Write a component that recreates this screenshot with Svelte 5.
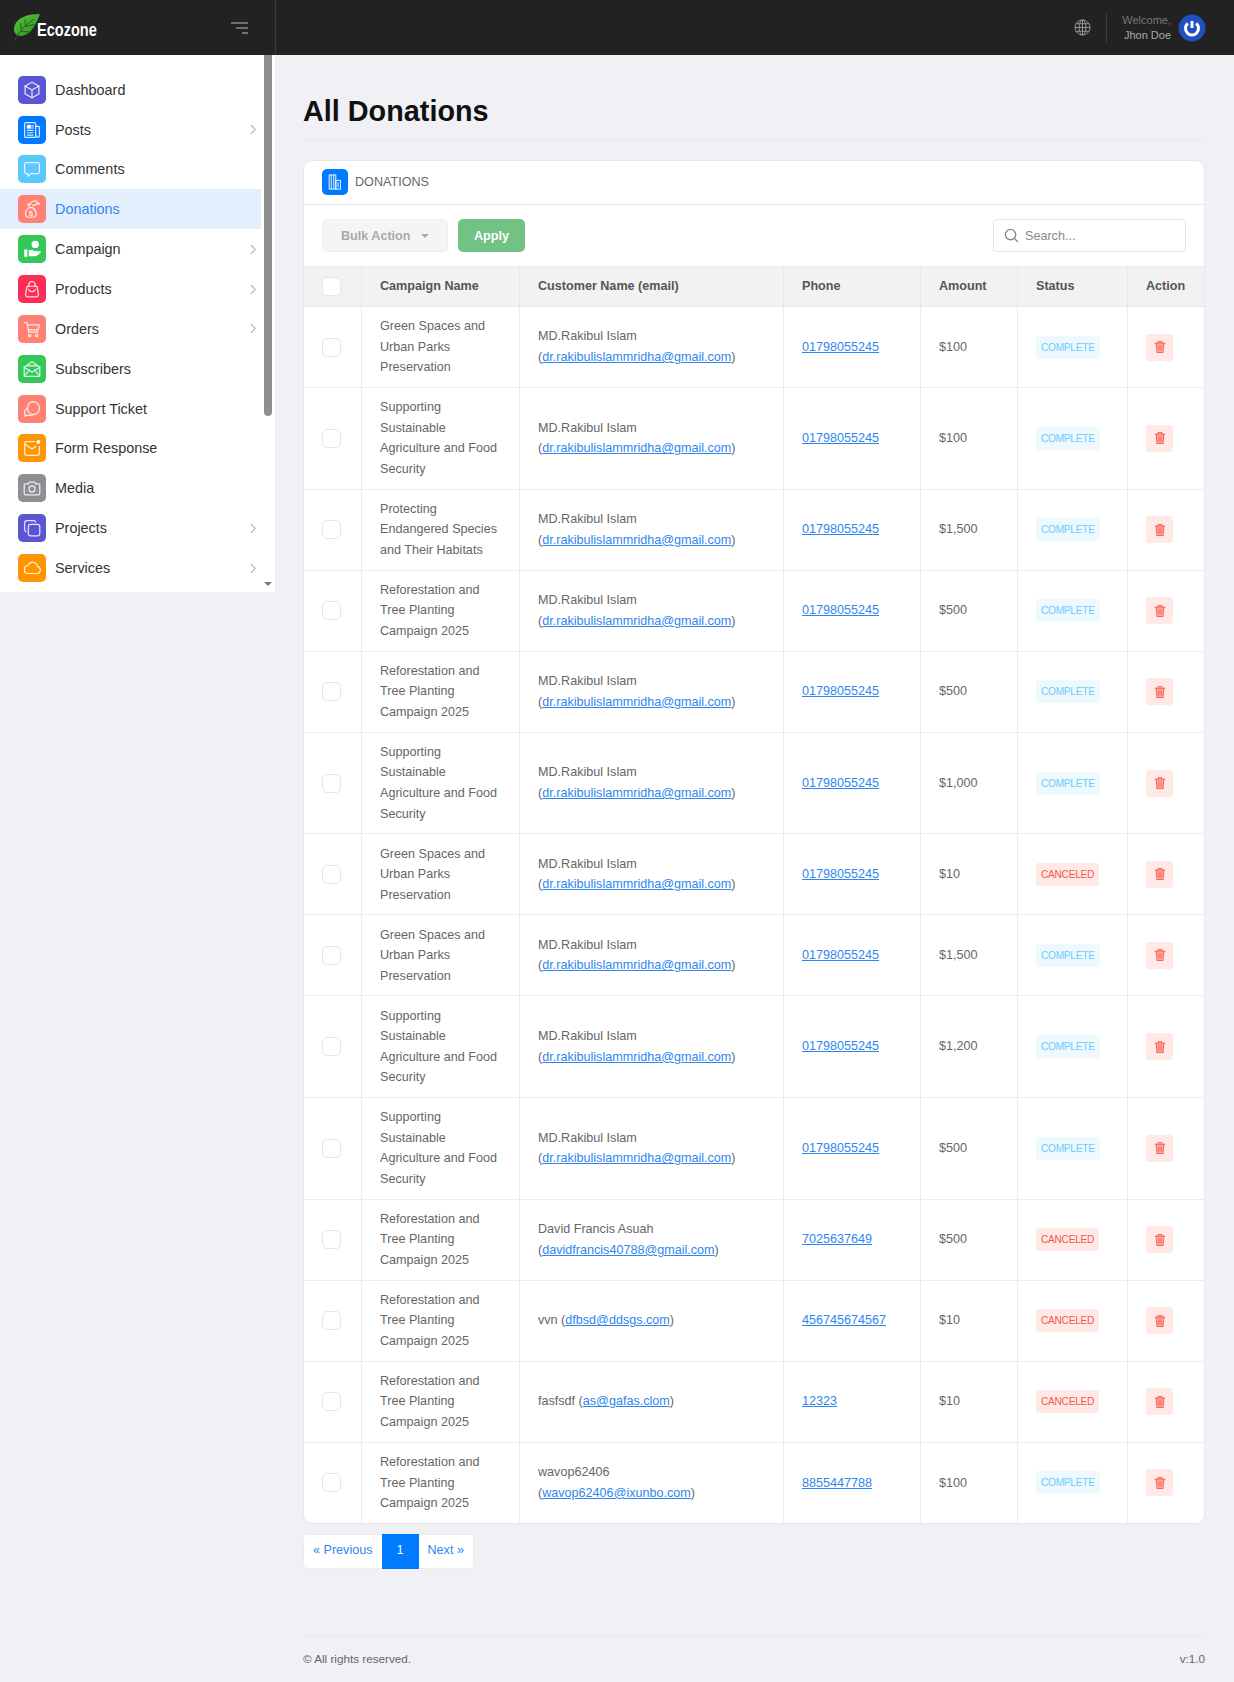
<script>
  const icon = {
    cube: '<path d="M12 3.5l7.5 4.2v8.6L12 20.5l-7.5-4.2V7.700z"/><path d="M4.500 7.700L12 12l7.500-4.300M12 12v8.500"/>',
    news: '<rect x="4" y="4" width="12" height="16" rx="1"/><path d="M16 8h3.500a.5.5 0 0 1 .5.500V18.500a1.500 1.500 0 0 1-3 0M7 12.500h6M7 15h6M7 17.500h6"/><rect x="7" y="7" width="3.500" height="3" fill="#fff"/><path d="M12 7.500h1.500M12 9.800h1.500"/>',
    chat: '<path d="M6 5h12a2 2 0 0 1 2 2v8a2 2 0 0 1-2 2h-7l-3.500 3v-3H6a2 2 0 0 1-2-2V7a2 2 0 0 1 2-2z"/>',
    donate: '<path d="M9 10.500C6 12.500 5 15.500 5 17.500a3.500 3.500 0 0 0 3.500 3.500h4.500a3.500 3.500 0 0 0 3.500-3.500c0-2.500-1.500-5.500-4-7M9 10.500h3.500M9 10.500L7.500 6.500l2.500.8"/><path d="M10 7c1-2.500 3-4 5-4l5.500 3.500-5 .5M12.500 8c1.500.3 3-.2 3.500-1"/><text x="10.800" y="19.800" font-size="8.500" text-anchor="middle" fill="#fff" stroke="none" font-family="Liberation Sans">$</text>',
    hand: '<circle cx="15.500" cy="7" r="4" fill="#fff" stroke="none"/><rect x="3.500" y="12.500" width="3.500" height="8" fill="#fff" stroke="none"/><path d="M8.500 13h3.500c1 0 2 1.200 3 1.200h2.500c.8 0 1 1.600 0 1.600H13.500l5-.8 2-1c.8-.3 1.500.6.8 1.500-1.300 1.800-3 3.500-5.300 4.300H8.500z" fill="#fff" stroke="none"/>',
    bag: '<path d="M6.500 9h11l1.500 9.500a2 2 0 0 1-2 2H7a2 2 0 0 1-2-2z"/><path d="M8.500 9V7.500a3.500 3.500 0 0 1 7 0V9M8.500 12.500c.5 3 6.500 3 7 0"/>',
    cart: '<path d="M3.500 5h3l2 10.500h10M7 7.500h13l-1.500 5.500H8"/><circle cx="9.500" cy="19" r="1.300"/><circle cx="17" cy="19" r="1.300"/>',
    mail: '<path d="M3.500 10L12 4l8.500 6v8.500a1.500 1.500 0 0 1-1.500 1.500H5a1.500 1.500 0 0 1-1.500-1.500z"/><path d="M3.500 10l8.500 5.500 8.500-5.500M3.500 19.500l6-6.500M20.500 19.500l-6-6.500M7 8.500h10"/>',
    support: '<path d="M13.500 4a7 7 0 0 1 6.500 7c0 3-1.500 5.500-4 6.500-2 .8-5 .5-6.500-1-2-1.800-3-4.500-2-7.500C8.500 6 11 4 13.500 4z"/><path d="M7 11.500c-2 1-3.500 3-3 5 .2 1 .5 1.500.5 3.500 1-1 2-1.500 3-1.300 2 .5 4 .3 5.500-.8"/>',
    inbox: '<path d="M14.500 5H6a2 2 0 0 0-2 2v11a2 2 0 0 0 2 2h12a2 2 0 0 0 2-2v-7.500"/><path d="M4.500 8l7.500 5 4.500-3"/><circle cx="19" cy="5.500" r="2.200" fill="#fff" stroke="none"/>',
    camera: '<path d="M5 7.500h3l1.200-2h5.600l1.200 2h3a1.500 1.500 0 0 1 1.500 1.500v9a1.500 1.500 0 0 1-1.500 1.500H5A1.500 1.500 0 0 1 3.500 18V9A1.500 1.500 0 0 1 5 7.500z"/><circle cx="12" cy="13" r="3.300"/>',
    copy: '<rect x="8" y="8" width="12.500" height="12.500" rx="2.500"/><path d="M16 5.500c-.3-1-1-1.500-2-1.500H6.500A2.500 2.500 0 0 0 4 6.500V14c0 1 .6 1.700 1.500 2"/>',
    cloud: '<path d="M7 18.500h10.500a3.800 3.800 0 0 0 .6-7.500 5.500 5.500 0 0 0-10.500-1.300A4.500 4.500 0 0 0 7 18.500z" transform="translate(0 -.500)"/>'
  };

  const menu = [
    { label: 'Dashboard', color: '#5856d6', svg: icon.cube },
    { label: 'Posts', color: '#007aff', svg: icon.news, sub: true },
    { label: 'Comments', color: '#5ac8fa', svg: icon.chat },
    { label: 'Donations', color: '#ff8074', svg: icon.donate, active: true },
    { label: 'Campaign', color: '#34c759', svg: icon.hand, sub: true },
    { label: 'Products', color: '#ff2d55', svg: icon.bag, sub: true },
    { label: 'Orders', color: '#ff8074', svg: icon.cart, sub: true },
    { label: 'Subscribers', color: '#34c759', svg: icon.mail },
    { label: 'Support Ticket', color: '#ff8074', svg: icon.support },
    { label: 'Form Response', color: '#ff9500', svg: icon.inbox },
    { label: 'Media', color: '#8e8e93', svg: icon.camera },
    { label: 'Projects', color: '#5856d6', svg: icon.copy, sub: true },
    { label: 'Services', color: '#ff9500', svg: icon.cloud, sub: true }
  ];

  const green = 'Green Spaces and Urban Parks Preservation';
  const farm = 'Supporting Sustainable Agriculture and Food Security';
  const species = 'Protecting Endangered Species and Their Habitats';
  const trees = 'Reforestation and Tree Planting Campaign 2025';
  const md = 'MD.Rakibul Islam';
  const mdMail = 'dr.rakibulislammridha@gmail.com';
  const mdPhone = '01798055245';

  const rows = [
    [green, md, mdMail, mdPhone, '$100', 'COMPLETE'],
    [farm, md, mdMail, mdPhone, '$100', 'COMPLETE'],
    [species, md, mdMail, mdPhone, '$1,500', 'COMPLETE'],
    [trees, md, mdMail, mdPhone, '$500', 'COMPLETE'],
    [trees, md, mdMail, mdPhone, '$500', 'COMPLETE'],
    [farm, md, mdMail, mdPhone, '$1,000', 'COMPLETE'],
    [green, md, mdMail, mdPhone, '$10', 'CANCELED'],
    [green, md, mdMail, mdPhone, '$1,500', 'COMPLETE'],
    [farm, md, mdMail, mdPhone, '$1,200', 'COMPLETE'],
    [farm, md, mdMail, mdPhone, '$500', 'COMPLETE'],
    [trees, 'David Francis Asuah', 'davidfrancis40788@gmail.com', '7025637649', '$500', 'CANCELED'],
    [trees, 'vvn', 'dfbsd@ddsgs.com', '456745674567', '$10', 'CANCELED'],
    [trees, 'fasfsdf', 'as@gafas.clom', '12323', '$10', 'CANCELED'],
    [trees, 'wavop62406', 'wavop62406@ixunbo.com', '8855447788', '$100', 'COMPLETE']
  ];
</script>

<div class="page">
  <header class="topbar">
    <div class="brand">
      <div class="logo">
        <svg class="leaf" viewBox="0 0 27 27" width="27" height="27">
          <defs>
            <linearGradient id="leafFill" x1="1" y1="1" x2="0" y2="0">
              <stop offset="0" stop-color="#2c8f25"/>
              <stop offset="1" stop-color="#5cc53c"/>
            </linearGradient>
          </defs>
          <path d="M27 0C15 0 3 3 1 14c-.5 4 2 8 6 8 8 0 14-6 20-22z" fill="url(#leafFill)"/>
          <path d="M1.500 27C6 18 12 11 21 5M8.500 17.500L7.500 9M12.500 13L12 5.500M8.500 17.500l8 .5M13 12.500l8.500-2" stroke="#1c5f18" stroke-width="1" fill="none"/>
        </svg>
        <span>Ecozone</span>
      </div>
      <svg class="toggle" viewBox="0 0 18 12" width="18" height="12">
        <path d="M0 1h17M5 6h12M11 11h6" stroke="#8a8a8a" stroke-width="1.500"/>
      </svg>
    </div>
    <div class="top-right">
      <svg class="globe" viewBox="0 0 18 18" width="17" height="17" fill="none" stroke="#9a9a9a" stroke-width="1">
        <circle cx="9" cy="9" r="8"/>
        <ellipse cx="9" cy="9" rx="3.600" ry="8"/>
        <path d="M1 9h16M2 5h14M2 13h14M9 1v16"/>
      </svg>
      <div class="welcome">
        <span class="hello">Welcome,</span>
        <span class="who">Jhon Doe</span>
      </div>
      <div class="avatar">
        <svg viewBox="0 0 28 28" width="28" height="28">
          <circle cx="14" cy="14" r="13.500" fill="#1f4fc0"/>
          <path d="M9.800 9.500a6.500 6.500 0 1 0 8.400 0" fill="none" stroke="#fff" stroke-width="3"/>
          <path d="M14 7v7" stroke="#fff" stroke-width="3"/>
        </svg>
      </div>
    </div>
  </header>

  <div class="body">
    <aside class="sidebar">
      <ul class="nav">
        {#each menu as item}
          <li class:active={item.active}>
            <span class="nav-icon" style="background:{item.color}">
              <svg viewBox="0 0 24 24" width="22" height="22" fill="none" stroke="#fff" stroke-opacity=".85" stroke-width="1.300" stroke-linejoin="round" stroke-linecap="round">
                {@html item.svg}
              </svg>
            </span>
            <span class="nav-label">{item.label}</span>
            {#if item.sub}
              <svg class="chev" viewBox="0 0 8 12" width="7" height="11" fill="none" stroke="#aaa" stroke-width="1.200">
                <path d="M1 1l5 5-5 5"/>
              </svg>
            {/if}
          </li>
        {/each}
      </ul>
      <div class="thumb"></div>
      <div class="arrow"></div>
    </aside>

    <main class="content">
      <h1>All Donations</h1>

      <section class="card">
        <div class="card-head">
          <span class="head-icon">
            <svg viewBox="0 0 24 24" width="20" height="20" fill="none" stroke="#fff" stroke-width="1.100">
              <rect x="5" y="3.500" width="8" height="17"/>
              <rect x="13" y="10" width="5.500" height="10.500"/>
              <path d="M7.500 3.500v17M10.500 3.500v17M15.700 12.500v6"/>
            </svg>
          </span>
          <span>DONATIONS</span>
        </div>

        <div class="toolbar">
          <div class="actions">
            <button class="bulk" disabled>Bulk Action <i class="caret"></i></button>
            <button class="apply">Apply</button>
          </div>
          <label class="search">
            <svg viewBox="0 0 16 16" width="15" height="15" fill="none" stroke="#888" stroke-width="1.400">
              <circle cx="7" cy="7" r="5.500"/>
              <path d="M11 11l4 4"/>
            </svg>
            <input type="text" placeholder="Search..." />
          </label>
        </div>

        <table>
          <colgroup>
            <col style="width:58px" />
            <col style="width:158px" />
            <col style="width:264px" />
            <col style="width:137px" />
            <col style="width:97px" />
            <col style="width:110px" />
            <col style="width:78px" />
          </colgroup>
          <thead>
            <tr>
              <th><input type="checkbox" class="check" /></th>
              <th>Campaign Name</th>
              <th>Customer Name (email)</th>
              <th>Phone</th>
              <th>Amount</th>
              <th>Status</th>
              <th>Action</th>
            </tr>
          </thead>
          <tbody>
            {#each rows as r}
              <tr>
                <td><input type="checkbox" class="check" /></td>
                <td>{r[0]}</td>
                <td>{r[1]} (<a href="#top">{r[2]}</a>)</td>
                <td><a href="#top">{r[3]}</a></td>
                <td>{r[4]}</td>
                <td>
                  <span class="badge" class:canceled={r[5] === 'CANCELED'}>{r[5]}</span>
                </td>
                <td>
                  <button class="trash" aria-label="Delete">
                    <svg viewBox="0 0 14 16" width="12" height="14" fill="none" stroke="#f9655a" stroke-width="1.200">
                      <path d="M1 3.500h12M5 3V1.500h4V3" />
                      <path d="M2.500 3.500l1 11h7l1-11z" fill="#ffa9a1" />
                      <path d="M5.500 6v6.500M7 6v6.500M8.500 6v6.500" stroke-width=".8" />
                    </svg>
                  </button>
                </td>
              </tr>
            {/each}
          </tbody>
        </table>
      </section>

      <nav class="pager">
        <a href="#top">« Previous</a>
        <span class="current">1</span>
        <a href="#top">Next »</a>
      </nav>

      <footer>
        <span>© All rights reserved.</span>
        <span>v:1.0</span>
      </footer>
    </main>
  </div>
</div>

<style>
  :global(body) {
    background: #f0f0f5;
    font-family: "Liberation Sans", Arial, sans-serif;
  }

  .page {
    width: 1234px;
    height: 1682px;
    overflow: hidden;
  }

  .topbar {
    height: 55px;
    background: #222;
    display: flex;
    justify-content: space-between;
  }

  .brand {
    width: 276px;
    box-sizing: border-box;
    border-right: 1px solid #3a3a3a;
    display: flex;
    align-items: center;
    justify-content: space-between;
    padding: 0 26px 0 13px;
  }

  .logo {
    display: flex;
    align-items: flex-end;
    position: relative;
  }

  .logo span {
    color: #fff;
    font-weight: 700;
    font-size: 17.500px;
    line-height: 24px;
    margin-left: -3px;
    margin-bottom: -1px;
    width: 60px;
    white-space: nowrap;
    transform: scaleX(.83);
    transform-origin: left center;
  }

  .top-right {
    display: flex;
    align-items: center;
    padding-right: 28px;
  }

  .globe {
    margin-right: 15px;
  }

  .welcome {
    border-left: 1px solid #3f3f3f;
    height: 28px;
    padding-left: 15px;
    margin-right: 7px;
    display: flex;
    flex-direction: column;
    align-items: flex-end;
    justify-content: center;
    font-size: 11px;
    line-height: 14.500px;
  }

  .hello {
    color: #777;
  }

  .who {
    color: #aaa;
  }

  .avatar {
    height: 28px;
  }

  .body {
    display: flex;
    align-items: flex-start;
  }

  .sidebar {
    position: relative;
    width: 276px;
    height: 537px;
    flex-shrink: 0;
    background: #fff;
    box-sizing: border-box;
    border-right: 1px solid #f0f0f0;
    overflow: hidden;
  }

  .nav {
    list-style: none;
    margin: 0;
    padding: 14.800px 14px 0 0;
    width: 261px;
  }

  .nav li {
    height: 39.870px;
    display: flex;
    align-items: center;
    padding: 0 4px 0 18px;
    box-sizing: border-box;
    width: 261px;
    color: #333;
    font-size: 14.400px;
  }

  .nav li.active {
    background: #e3effc;
    color: #2f86f0;
  }

  .nav-icon {
    width: 28px;
    height: 28px;
    border-radius: 5px;
    display: flex;
    align-items: center;
    justify-content: center;
    margin-right: 9px;
    flex-shrink: 0;
  }

  .nav-label {
    flex: 1;
  }

  .thumb {
    position: absolute;
    top: 0;
    left: 264px;
    width: 8px;
    height: 361px;
    background: #8f8f8f;
    border-radius: 0 0 4px 4px;
  }

  .arrow {
    position: absolute;
    left: 264px;
    top: 527px;
    border-left: 4px solid transparent;
    border-right: 4px solid transparent;
    border-top: 4px solid #777;
  }

  .content {
    flex: 1;
    padding: 0 29px 0 27px;
    min-width: 0;
  }

  h1 {
    margin: 0 0 19px;
    padding: 40px 0 12px;
    border-bottom: 1px solid #e8e8ec;
    font-size: 28.800px;
    line-height: 33px;
    font-weight: 700;
    color: #111;
  }

  .card {
    background: #fff;
    border: 1px solid #e8e8e8;
    border-radius: 10px;
    overflow: hidden;
    width: 902px;
    box-sizing: border-box;
  }

  .card-head {
    height: 44px;
    box-sizing: border-box;
    border-bottom: 1px solid #e8e8e8;
    display: flex;
    align-items: center;
    gap: 7px;
    padding: 0 0 1px 18px;
    font-size: 12.600px;
    color: #666;
  }

  .head-icon {
    width: 26px;
    height: 26px;
    border-radius: 5px;
    background: #007aff;
    display: flex;
    align-items: center;
    justify-content: center;
  }

  .toolbar {
    height: 61px;
    box-sizing: border-box;
    padding: 14px 18px 0;
    display: flex;
    justify-content: space-between;
  }

  .actions {
    display: flex;
    gap: 10px;
  }

  button {
    font-family: inherit;
  }

  .bulk {
    width: 126px;
    height: 33px;
    background: #f5f5f5;
    border: 1px solid #eee;
    border-radius: 5px;
    color: #aaa;
    font-weight: 700;
    font-size: 12.600px;
  }

  .caret {
    display: inline-block;
    margin-left: 7px;
    vertical-align: middle;
    border-left: 4px solid transparent;
    border-right: 4px solid transparent;
    border-top: 4px solid #aaa;
  }

  .apply {
    width: 67px;
    height: 33px;
    background: #72c285;
    border: 0;
    border-radius: 5px;
    color: #fff;
    font-weight: 700;
    font-size: 12.600px;
  }

  .search {
    width: 193px;
    height: 33px;
    box-sizing: border-box;
    border: 1px solid #e5e5e5;
    border-radius: 4px;
    display: flex;
    align-items: center;
    gap: 6px;
    padding-left: 10px;
  }

  .search input {
    border: 0;
    outline: 0;
    width: 150px;
    padding: 0;
    font: 12.600px "Liberation Sans", Arial, sans-serif;
  }

  .search input::placeholder {
    color: #888;
  }

  table {
    width: 900px;
    table-layout: fixed;
    border-collapse: separate;
    border-spacing: 0;
    font-size: 12.600px;
    line-height: 20.600px;
    color: #666;
  }

  th {
    height: 41px;
    box-sizing: border-box;
    padding: 0 18px;
    text-align: left;
    background: #f2f2f2;
    color: #555;
    font-size: 12.600px;
    font-weight: 700;
    border-top: 1px solid #ebebeb;
    border-bottom: 1px solid #e8e8e8;
    border-right: 1px solid #e8e8e8;
  }

  td {
    padding: 9.140px 18px;
    border-bottom: 1px solid #ececec;
    border-right: 1px solid #ececec;
  }

  th:last-child,
  td:last-child {
    border-right: 0;
  }

  tr:last-child td {
    border-bottom: 0;
  }

  a {
    color: #2f86f0;
  }

  .check {
    appearance: none;
    display: block;
    width: 19px;
    height: 19px;
    margin: 0;
    background: #fff;
    border: 1px solid #e6e6e6;
    border-radius: 5px;
  }

  .badge {
    display: inline-block;
    padding: 0 5px;
    height: 23px;
    line-height: 23px;
    border-radius: 3px;
    background: #eef9fe;
    color: #6ccdfb;
    font-size: 10.200px;
    letter-spacing: -.3px;
  }

  .badge.canceled {
    background: #ffe9e7;
    color: #f5574c;
  }

  .trash {
    display: flex;
    align-items: center;
    justify-content: center;
    width: 27px;
    height: 27px;
    padding: 0;
    border: 0;
    border-radius: 3px;
    background: #ffe9e7;
  }

  .pager {
    display: flex;
    width: max-content;
    margin-top: 10px;
    height: 33px;
    background: #fff;
    border: 1px solid #ececec;
    border-radius: 4px;
    font-size: 12.600px;
    line-height: 31px;
  }

  .pager a {
    text-decoration: none;
    padding: 0 9px;
  }

  .pager .current {
    width: 37px;
    text-align: center;
    background: #007aff;
    color: #fff;
    margin: -1px 0;
    line-height: 33px;
  }

  footer {
    margin-top: 67px;
    border-top: 1px solid #e8e8ec;
    display: flex;
    justify-content: space-between;
    padding-top: 15px;
    font-size: 11.700px;
    color: #666;
  }
</style>
